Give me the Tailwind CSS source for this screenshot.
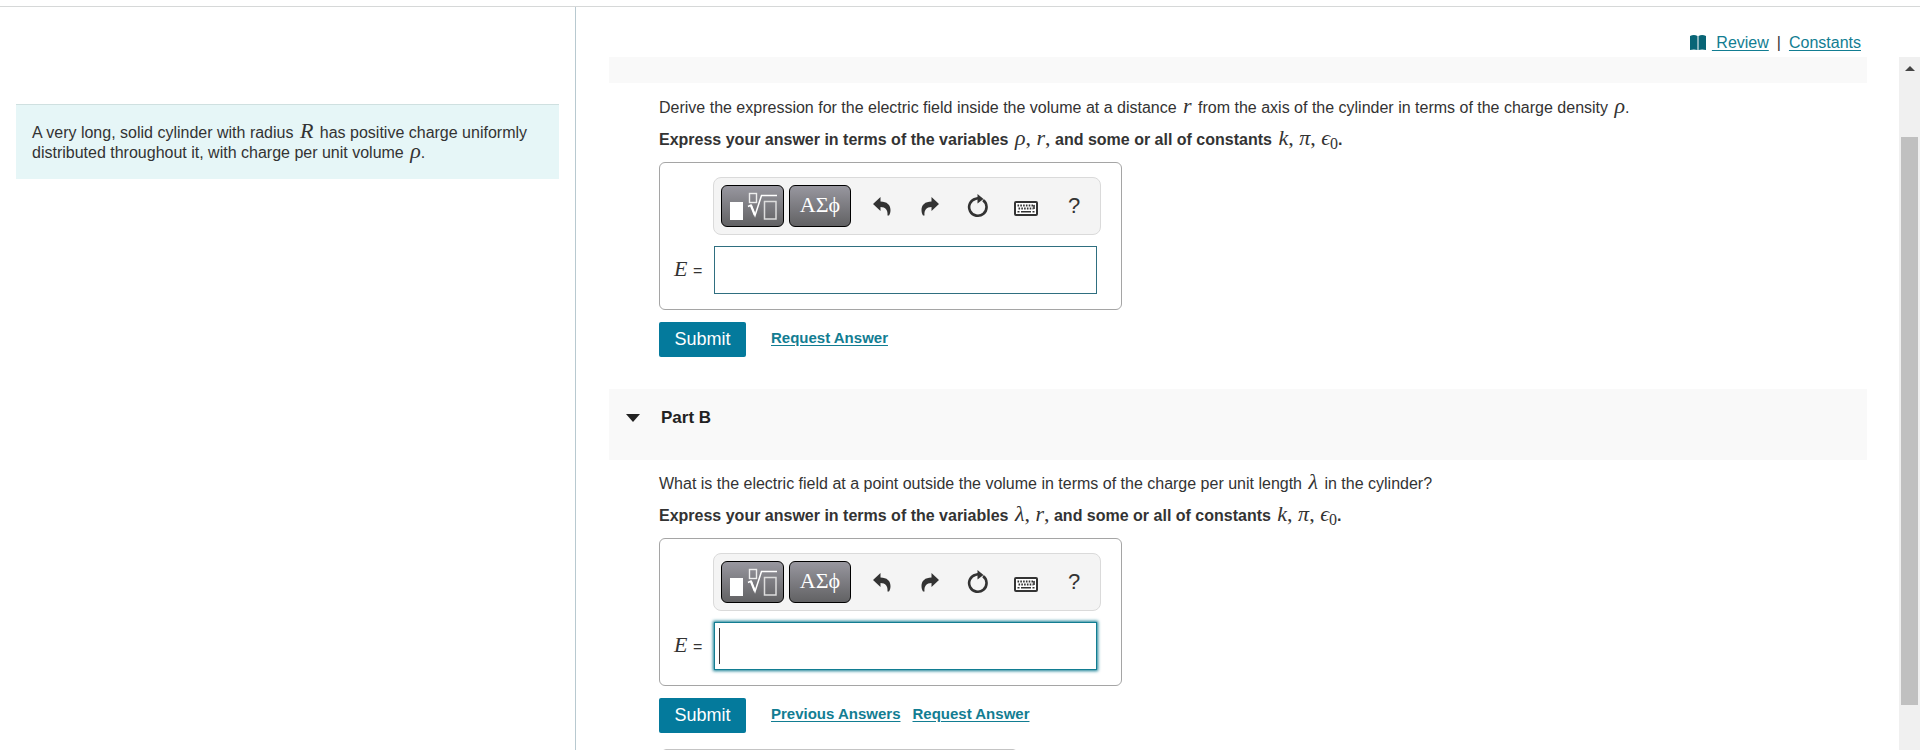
<!DOCTYPE html>
<html lang="en">

<head>
    <meta charset="UTF-8">
    <meta name="viewport" content="width=device-width, initial-scale=1.0">
    <title>Electric Field of a Cylinder</title>
    <script src="https://cdn.jsdelivr.net/npm/@tailwindcss/browser@4"></script>
</head>

<body class="flex flex-col h-screen overflow-hidden bg-white pt-1.5 font-['Liberation_Sans',Arial,sans-serif] text-base leading-5 text-[#333]">

    <!-- Shared icons -->
    <svg class="hidden">
        <symbol id="icon-templates" viewBox="0 0 48 28">
            <rect x="1" y="10" width="13" height="18" fill="#fff" />
            <rect x="20.5" y="1.5" width="7" height="9" fill="none" stroke="#eee" stroke-width="1.4" />
            <path d="M19 14.5l3-1.5 4 10.500L32.500 3.500H48" fill="none" stroke="#fff" stroke-width="1.500" />
            <path d="M22 13.500l3.800 9.500" fill="none" stroke="#fff" stroke-width="2.200" />
            <rect x="35.500" y="9.500" width="11.500" height="17.500" fill="none" stroke="#ddd" stroke-width="1.500" />
        </symbol>
        <symbol id="icon-undo" viewBox="0 0 18 20">
            <path d="M0 8L7.500 1v4.500C14 5.500 17.500 9 17.500 14c0 2-.5 4-1.500 5.500h-1.500C15 14 12.500 11 7.500 11v4z" fill="#333" />
        </symbol>
        <symbol id="icon-reset" viewBox="0 0 22 24">
            <path d="M14.500 5.200A8.700 8.700 0 1 1 7 5.300q1.800-1 4-1" fill="none" stroke="#333" stroke-width="2.600" transform="rotate(12 11 13)" />
            <path d="M10.500 0l6 5-6 4.500z" fill="#333" />
        </symbol>
        <symbol id="icon-keyboard" viewBox="0 0 24 15">
            <rect x="1" y="1" width="22" height="13" rx="1" fill="#fff" stroke="#333" stroke-width="2" />
            <path d="M3.500 4.500h17M4.500 7.500h15" fill="none" stroke="#333" stroke-width="1.800" stroke-dasharray="1.600 1.200" />
            <path d="M3.500 10.700h2M7 10.700h10M18.500 10.700h2M20 4v4" fill="none" stroke="#333" stroke-width="1.600" />
        </symbol>
    </svg>

    <div class="flex flex-1 min-h-0 border-t border-[#d6d8d8]">

        <!-- Problem statement -->
        <aside class="w-[30%] shrink-0 border-r border-[#b8c9d0] pl-4 pr-4 pt-[97px]">
            <div class="border-t border-[#cfe0e0] bg-[#e6f6f7] px-4 pt-[18px] pb-4">
                <p>A very long, solid cylinder with radius <i class="mx-0.5 font-['Liberation_Serif',serif] text-[22px] leading-3">R</i> has positive charge uniformly distributed throughout it, with charge per unit volume <i class="ml-0.5 font-['Liberation_Serif',serif] text-[22px] leading-3">ρ</i>.</p>
            </div>
        </aside>

        <main class="flex flex-1 flex-col min-w-0">
            <nav class="flex h-[50px] shrink-0 items-center justify-end pt-[22px] pr-[59px]">
                <svg class="mr-1.5 h-4 w-4" viewBox="0 0 16 16" fill="#086576">
                    <path d="M0 1q4-2 7.500 0v14Q4 14 0 15zM8.500 1q3.500-2 7.500 0v14q-4-1-7.500 0z" />
                </svg>
                <a href="#" class="whitespace-pre text-[#127d92] underline underline-offset-2"> Review</a>
                <span class="px-2">|</span>
                <a href="#" class="text-[#127d92] underline underline-offset-2">Constants</a>
            </nav>

            <div class="flex flex-1 min-h-0">
                <div class="mr-8 ml-[33px] flex-1 overflow-hidden">

                    <!-- Part A -->
                    <section>
                        <div class="h-[26px] bg-[#f9f9f9]"></div>
                        <div class="px-[50px] pt-[15px]">
                            <p class="mb-3 h-5">Derive the expression for the electric field inside the volume at a distance <i class="mx-0.5 font-['Liberation_Serif',serif] text-[22px] leading-3">r</i> from the axis of the cylinder in terms of the charge density <i class="ml-0.5 font-['Liberation_Serif',serif] text-[22px] leading-3">ρ</i>.</p>
                            <p class="mb-3 h-5 font-bold">Express your answer in terms of the variables <span class="ml-0.5 font-['Liberation_Serif',serif] text-[22px] leading-3 font-normal"><i>ρ</i>, <i>r</i>,</span> and some or all of constants <span class="ml-0.5 font-['Liberation_Serif',serif] text-[22px] leading-3 font-normal"><i>k</i>, <i>π</i>, <i>ϵ</i><sub class="text-base leading-none">0</sub></span>.</p>

                            <div class="h-[148px] w-[463px] rounded-md border border-[#a5a5a5] pt-3.5">
                                <div class="ml-[53px] flex h-[58px] w-[388px] items-center rounded-lg border border-[#dadada] bg-[#f4f4f4] pl-[7px]">
                                    <button aria-label="Templates" class="mr-[5px] flex h-[42px] w-[63px] items-center justify-center rounded-md border border-black bg-linear-to-b from-[#98979f] to-[#626264]"><svg class="h-7 w-12"><use href="#icon-templates" /></svg></button>
                                    <button class="h-[42px] w-[62px] rounded-md border border-black bg-linear-to-b from-[#98979f] to-[#626264] pb-0.5 font-['Liberation_Serif',serif] text-[22px] text-white">ΑΣϕ</button>
                                    <div class="ml-[7px] flex">
                                        <button aria-label="Undo" class="flex h-10 w-12 items-center justify-center"><svg class="h-5 w-[18px]"><use href="#icon-undo" /></svg></button>
                                        <button aria-label="Redo" class="flex h-10 w-12 items-center justify-center"><svg class="h-5 w-[18px] -scale-x-100"><use href="#icon-undo" /></svg></button>
                                        <button aria-label="Reset" class="flex h-10 w-12 items-center justify-center"><svg class="h-6 w-[22px]"><use href="#icon-reset" /></svg></button>
                                        <button aria-label="Keyboard shortcuts" class="flex h-10 w-12 items-center justify-center pt-1"><svg class="h-[15px] w-6"><use href="#icon-keyboard" /></svg></button>
                                        <button aria-label="Help" class="h-10 w-12 text-[22px]">?</button>
                                    </div>
                                </div>
                                <div class="mt-[11px] flex h-12 items-center">
                                    <label for="answer-a" class="w-[54px] pl-3.5"><i class="mr-px font-['Liberation_Serif',serif] text-[22px]">E</i> =</label>
                                    <input id="answer-a" type="text" class="h-12 w-[383px] border border-[#2f6f80] bg-white px-2 outline-none">
                                </div>
                            </div>

                            <div class="mt-3 flex h-[35px] items-center">
                                <button class="mr-[25px] h-[35px] w-[87px] rounded-xs bg-[#047a9c] pb-0.5 text-lg text-white">Submit</button>
                                <a href="#" class="pb-1 text-[15px] font-bold text-[#127d92] underline underline-offset-2">Request Answer</a>
                            </div>
                        </div>
                    </section>

                    <!-- Part B -->
                    <section class="mt-8">
                        <div class="h-[71px] bg-[#f9f9f9] pt-[19px]">
                            <button class="flex items-center pl-[17px] text-[17px] leading-5 font-bold text-[#222]">
                                <svg class="mr-[21px] h-2 w-3.5" viewBox="0 0 14 8" fill="#222"><path d="M0 0h14L7 8z" /></svg>
                                Part B
                            </button>
                        </div>
                        <div class="px-[50px] pt-3.5">
                            <p class="mb-3 h-5">What is the electric field at a point outside the volume in terms of the charge per unit length <i class="mx-0.5 font-['Liberation_Serif',serif] text-[22px] leading-3">λ</i> in the cylinder?</p>
                            <p class="mb-3 h-5 font-bold">Express your answer in terms of the variables <span class="ml-0.5 font-['Liberation_Serif',serif] text-[22px] leading-3 font-normal"><i>λ</i>, <i>r</i>,</span> and some or all of constants <span class="ml-0.5 font-['Liberation_Serif',serif] text-[22px] leading-3 font-normal"><i>k</i>, <i>π</i>, <i>ϵ</i><sub class="text-base leading-none">0</sub></span>.</p>

                            <div class="h-[148px] w-[463px] rounded-md border border-[#a5a5a5] pt-3.5">
                                <div class="ml-[53px] flex h-[58px] w-[388px] items-center rounded-lg border border-[#dadada] bg-[#f4f4f4] pl-[7px]">
                                    <button aria-label="Templates" class="mr-[5px] flex h-[42px] w-[63px] items-center justify-center rounded-md border border-black bg-linear-to-b from-[#98979f] to-[#626264]"><svg class="h-7 w-12"><use href="#icon-templates" /></svg></button>
                                    <button class="h-[42px] w-[62px] rounded-md border border-black bg-linear-to-b from-[#98979f] to-[#626264] pb-0.5 font-['Liberation_Serif',serif] text-[22px] text-white">ΑΣϕ</button>
                                    <div class="ml-[7px] flex">
                                        <button aria-label="Undo" class="flex h-10 w-12 items-center justify-center"><svg class="h-5 w-[18px]"><use href="#icon-undo" /></svg></button>
                                        <button aria-label="Redo" class="flex h-10 w-12 items-center justify-center"><svg class="h-5 w-[18px] -scale-x-100"><use href="#icon-undo" /></svg></button>
                                        <button aria-label="Reset" class="flex h-10 w-12 items-center justify-center"><svg class="h-6 w-[22px]"><use href="#icon-reset" /></svg></button>
                                        <button aria-label="Keyboard shortcuts" class="flex h-10 w-12 items-center justify-center pt-1"><svg class="h-[15px] w-6"><use href="#icon-keyboard" /></svg></button>
                                        <button aria-label="Help" class="h-10 w-12 text-[22px]">?</button>
                                    </div>
                                </div>
                                <div class="mt-[11px] flex h-12 items-center">
                                    <label for="answer-b" class="w-[54px] pl-3.5"><i class="mr-px font-['Liberation_Serif',serif] text-[22px]">E</i> =</label>
                                    <div class="relative">
                                        <input id="answer-b" type="text" class="block h-12 w-[383px] border border-[#127d92] bg-white px-2 shadow-[0_0_3px_1px_#127d92] outline-none">
                                        <span class="absolute top-1.5 left-[5px] h-9 w-px bg-[#333]"></span>
                                    </div>
                                </div>
                            </div>

                            <div class="mt-3 flex h-[35px] items-center">
                                <button class="mr-[25px] h-[35px] w-[87px] rounded-xs bg-[#047a9c] pb-0.5 text-lg text-white">Submit</button>
                                <a href="#" class="mr-3 pb-1 text-[15px] font-bold text-[#127d92] underline underline-offset-2">Previous Answers</a>
                                <a href="#" class="pb-1 text-[15px] font-bold text-[#127d92] underline underline-offset-2">Request Answer</a>
                            </div>
                            <div class="mt-4 ml-[3px] h-20 w-[355px] rounded-sm border border-[#c4c4c4]"></div>
                        </div>
                    </section>
                </div>

                <!-- Scrollbar -->
                <div class="flex w-[21px] flex-col items-center bg-[#f0f0f0]">
                    <svg class="mt-[9px] mb-[66px] h-[5px] w-2.5 shrink-0" viewBox="0 0 10 5" fill="#444"><path d="M0 5L5 0l5 5z" /></svg>
                    <div class="h-[82%] w-[17px] bg-[#c0c0c0]"></div>
                </div>
            </div>
        </main>
    </div>

</body>

</html>
